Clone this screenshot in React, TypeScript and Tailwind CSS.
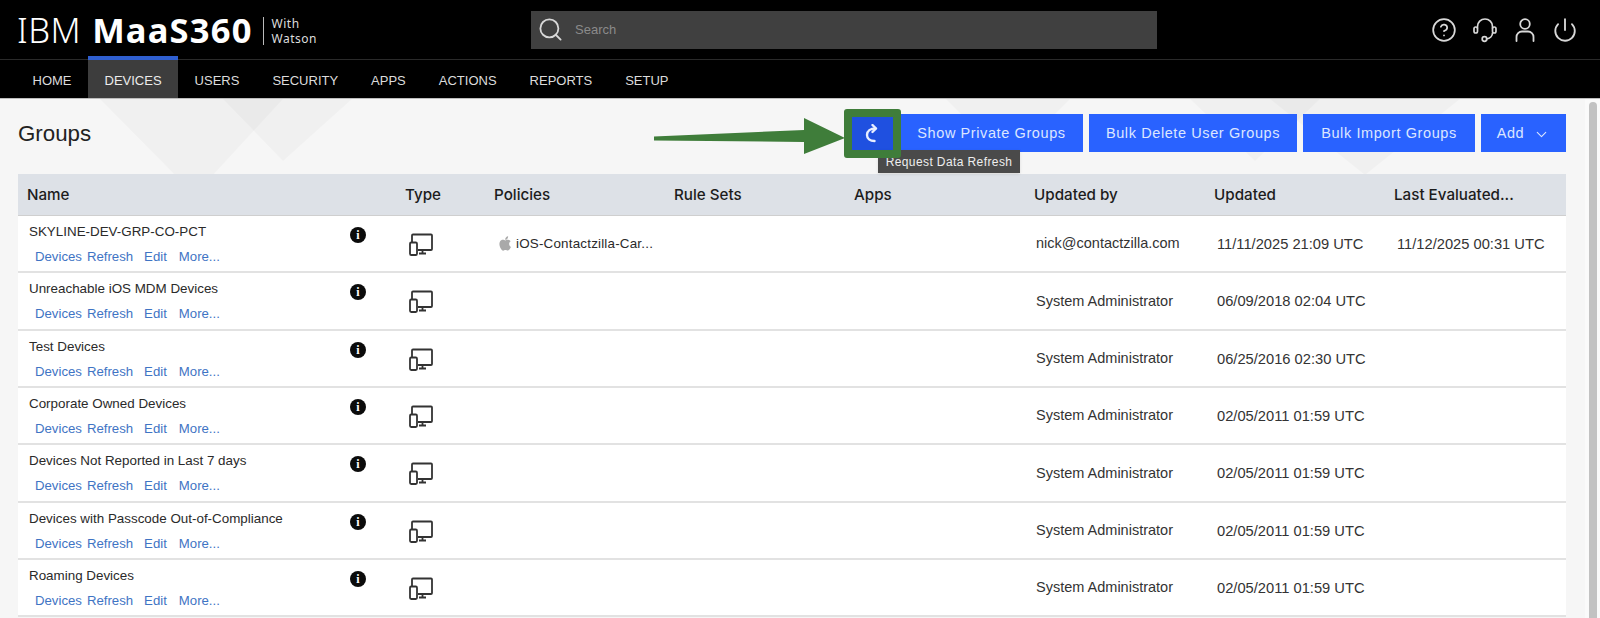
import { ChevronDown, CircleHelp, Power, Search } from "lucide-react";

const navItems = ["HOME", "DEVICES", "USERS", "SECURITY", "APPS", "ACTIONS", "REPORTS", "SETUP"];

type Group = {
  name: string;
  updatedBy: string;
  updated: string;
  policy?: string;
  evaluated?: string;
};

const groups: Group[] = [
  {
    name: "SKYLINE-DEV-GRP-CO-PCT",
    updatedBy: "nick@contactzilla.com",
    updated: "11/11/2025 21:09 UTC",
    policy: "iOS-Contactzilla-Car...",
    evaluated: "11/12/2025 00:31 UTC",
  },
  { name: "Unreachable iOS MDM Devices", updatedBy: "System Administrator", updated: "06/09/2018 02:04 UTC" },
  { name: "Test Devices", updatedBy: "System Administrator", updated: "06/25/2016 02:30 UTC" },
  { name: "Corporate Owned Devices", updatedBy: "System Administrator", updated: "02/05/2011 01:59 UTC" },
  { name: "Devices Not Reported in Last 7 days", updatedBy: "System Administrator", updated: "02/05/2011 01:59 UTC" },
  { name: "Devices with Passcode Out-of-Compliance", updatedBy: "System Administrator", updated: "02/05/2011 01:59 UTC" },
  { name: "Roaming Devices", updatedBy: "System Administrator", updated: "02/05/2011 01:59 UTC" },
];

const gridCols = "grid grid-cols-[378px_89px_180px_180px_180px_180px_180px_181px]";

const Headset = () => (
  <svg width="26" height="26" viewBox="0 0 26 26" fill="none" stroke="#d8d8d8" strokeWidth="1.7" strokeLinecap="round">
    <path d="M5.500 11V9.500a7.500 7.500 0 0 1 15 0V11" />
    <rect x="2" y="10" width="3.500" height="6" rx="1.700" />
    <rect x="20.500" y="10" width="3.500" height="6" rx="1.700" />
    <path d="M20.500 16c0 3-2.500 5.500-6 6" />
    <circle cx="12.500" cy="22" r="2.300" />
  </svg>
);

const UserIcon = () => (
  <svg width="24" height="26" viewBox="0 0 24 26" fill="none" stroke="#d8d8d8" strokeWidth="1.8" strokeLinecap="round">
    <circle cx="12" cy="7" r="4.800" />
    <path d="M3.500 24v-4a5.500 5.500 0 0 1 5.500-5.500h6a5.500 5.500 0 0 1 5.500 5.500v4" />
  </svg>
);

const DeviceIcon = () => (
  <svg width="24" height="23" viewBox="0 0 24 23" fill="none" stroke="#333" strokeWidth="1.800">
    <path d="M3 9V2.500A1 1 0 0 1 4 1.500H22A1 1 0 0 1 23 2.500V16A1 1 0 0 1 22 17H9" />
    <rect x="1" y="9.500" width="7" height="12.500" rx="1.200" />
    <path d="M13.500 17v3.500M10 20.500h7" />
  </svg>
);

const InfoDot = () => (
  <span className="flex h-4 w-4 items-center justify-center rounded-full bg-[#0b0b0b] font-['Liberation_Serif',serif] text-[12px] font-bold leading-none text-white">
    i
  </span>
);

const AppleIcon = () => (
  <svg width="15" height="17" viewBox="0 0 24 28" fill="#a9a9a9">
    <path d="M19.600 14.700c0-3 2.400-4.400 2.500-4.500-1.400-2-3.500-2.300-4.300-2.300-1.800-.2-3.600 1.100-4.500 1.100-.9 0-2.400-1.100-3.900-1C7.400 8 5.600 9.100 4.600 10.900c-2.100 3.600-.5 9 1.500 11.900 1 1.400 2.200 3 3.700 3 1.500-.1 2-1 3.800-1s2.300 1 3.800.9c1.600 0 2.600-1.400 3.600-2.900 1.100-1.700 1.600-3.300 1.600-3.400-.1 0-3-1.200-3-4.700zM16.700 6c.8-1 1.400-2.400 1.200-3.800-1.200.1-2.600.8-3.500 1.800-.8.900-1.400 2.300-1.200 3.700 1.300.1 2.700-.7 3.500-1.700z" />
  </svg>
);

// faint diamonds of the page wallpaper
const Backdrop = () => (
  <svg className="absolute left-0 top-0" width="1600" height="80" viewBox="0 0 1600 80" fill="#000" fillOpacity="0.022">
    <path d="M100 0H283L213 76H175Z" />
    <path d="M223 0H352L283 62Z" />
    <path d="M946 0H1070L1008 62Z" />
    <path d="M1190 0H1320L1255 62Z" />
    <path d="M1270 0H1460L1365 76Z" />
  </svg>
);

export default function App() {
  return (
    <div className="relative h-[618px] w-[1600px] overflow-hidden bg-[#f6f6f6] font-['Liberation_Sans',Arial,sans-serif] text-[#222]">
      <header className="bg-black">
        <div className="flex h-[60px] items-center border-b border-[#2a2a2a] pl-[17px] pr-[22px]">
          <div className="flex w-[514px] items-center pt-[2px] text-white">
            <span className="font-['Noto_Sans',sans-serif] text-[34.500px] font-light leading-none tracking-[0.5px]">IBM</span>
            <span className="ml-[11px] font-['Noto_Sans',sans-serif] text-[34.500px] font-bold leading-none tracking-[1.2px]">MaaS360</span>
            <span className="ml-[10px] h-[28px] w-px bg-[#bbb]" />
            <span className="ml-[8px] font-['Noto_Sans',sans-serif] text-[12px] leading-[15px] tracking-[0.5px] text-[#ddd]">
              With
              <br />
              Watson
            </span>
          </div>
          <div className="flex h-[38px] w-[626px] items-center bg-[#404040] pl-[6px]">
            <Search size={27} strokeWidth={1.6} className="text-[#d8d8d8]" />
            <span className="ml-[11px] pt-[1px] text-[13px] text-[#8b8b8b]">Search</span>
          </div>
          <div className="ml-auto flex items-center gap-[15px] pt-[1px]">
            <CircleHelp size={26} strokeWidth={1.6} className="text-[#d8d8d8]" />
            <Headset />
            <UserIcon />
            <Power size={26} strokeWidth={1.7} className="text-[#d8d8d8]" />
          </div>
        </div>
        <nav className="flex h-[38px] pl-[16px] text-[13px] text-[#dcdcdc]">
          {navItems.map((item) =>
            item === "DEVICES" ? (
              <div key={item} className="relative flex items-center bg-[#3d3d3d] px-[16.500px] pt-[3px] text-[#ececec]">
                <span className="absolute -top-[4px] left-0 h-[4px] w-full bg-[#2f5fd0]" />
                {item}
              </div>
            ) : (
              <div key={item} className="flex items-center px-[16.500px] pt-[3px]">
                {item}
              </div>
            ),
          )}
        </nav>
      </header>

      <main className="relative h-[520px] border-t border-[#bdbdbd]">
        <Backdrop />
        <div className="relative ml-[18px] w-[1548px]">
          <div className="flex h-[75px] items-start justify-between pt-[15px]">
            <h1 className="text-[22.300px] leading-[40px]">Groups</h1>
            <div className="flex gap-[6px] text-[14.500px] tracking-[0.6px] text-[#dce6ff]">
              <button className="flex h-[38px] w-[56px] items-center justify-center bg-[#1f50e0] text-white">
                <svg width="14" height="19" viewBox="0 0 14 19" fill="none" stroke="#e8eeff" strokeWidth="2.400" strokeLinecap="round" strokeLinejoin="round">
                  <path d="M10.500 4.500C5.500 4.500 2 7 2 11c0 3.500 3 6 7.500 6" />
                  <path d="M7.500 1L11 4.500L7.500 8" />
                </svg>
              </button>
              <button className="-ml-[6px] h-[38px] w-[183px] bg-[#2962ff] pt-[2px]">Show Private Groups</button>
              <button className="h-[38px] w-[208px] bg-[#2962ff] pt-[2px]">Bulk Delete User Groups</button>
              <button className="h-[38px] w-[172px] bg-[#2962ff] pt-[2px]">Bulk Import Groups</button>
              <button className="flex h-[38px] w-[85px] items-center justify-center gap-[9px] bg-[#2962ff] pt-[2px]">
                Add
                <ChevronDown size={17} strokeWidth={1.5} />
              </button>
            </div>
          </div>

          <div className={`${gridCols} h-[42px] items-center border-b border-[#cfcfcf] bg-[#dde1e7] pt-[1px] font-['Inter',sans-serif] text-[15.200px] font-medium text-[#1c1c1c]`}>
            <span className="pl-[9px]">Name</span>
            <span className="pl-[9px]">Type</span>
            <span className="pl-[9px]">Policies</span>
            <span className="pl-[9px]">Rule Sets</span>
            <span className="pl-[9px]">Apps</span>
            <span className="pl-[9px]">Updated by</span>
            <span className="pl-[9px]">Updated</span>
            <span className="pl-[9px]">Last Evaluated...</span>
          </div>

          {groups.map((group) => (
            <div key={group.name} className={`${gridCols} h-[57.330px] items-center border-b-2 border-[#e2e2e2] bg-white text-[13.400px] text-[#2a2a2a]`}>
              <div className="relative h-full pl-[11px]">
                <div className="pt-[8px] leading-[15px]">{group.name}</div>
                <div className="mt-[10px] flex pl-[6px] text-[13.200px] leading-[15px] text-[#3f74c4]">
                  <span>Devices</span>
                  <span className="ml-[5px]">Refresh</span>
                  <span className="ml-[11px]">Edit</span>
                  <span className="ml-[12px]">More...</span>
                </div>
                <span className="absolute left-[332px] top-[11px]">
                  <InfoDot />
                </span>
              </div>
              <div className="flex pl-[13px] pt-[2px]">
                <DeviceIcon />
              </div>
              <div className="flex items-center gap-[4px] pl-[12px] tracking-[0.2px]">
                {group.policy && <AppleIcon />}
                {group.policy}
              </div>
              <div />
              <div />
              <div className="pl-[11px] pt-[1px] text-[14.500px] text-[#333]">{group.updatedBy}</div>
              <div className="pl-[12px] pt-[1px] text-[14.700px] text-[#333]">{group.updated}</div>
              <div className="pl-[12px] pt-[1px] text-[14.700px] text-[#333]">{group.evaluated}</div>
            </div>
          ))}
        </div>

        {/* scrollbar */}
        <div className="absolute right-0 top-0 h-full w-[15px] bg-[#fafafa]">
          <div className="ml-[4px] mt-[3px] h-full w-[8px] rounded-full bg-[#c2c2c2]" />
        </div>
      </main>

      {/* annotation on top of the screenshot */}
      <div className="absolute left-[878px] top-[150px] flex h-[23px] w-[142px] items-center justify-center bg-[#4a4a4a] text-[12px] tracking-[0.4px] text-[#eee] shadow">
        Request Data Refresh
      </div>
      <svg className="absolute left-[650px] top-[112px]" width="200" height="50" viewBox="0 0 200 50" fill="#3f7d3a">
        <path d="M4 24.500 L154 18 L154 6 L195 26 L154 42 L154 30 L4 28.500 Z" />
      </svg>
      <div className="absolute left-[844px] top-[109px] h-[49px] w-[57px] rounded-[3px] border-[8px] border-[#3f7d3a]" />
    </div>
  );
}
